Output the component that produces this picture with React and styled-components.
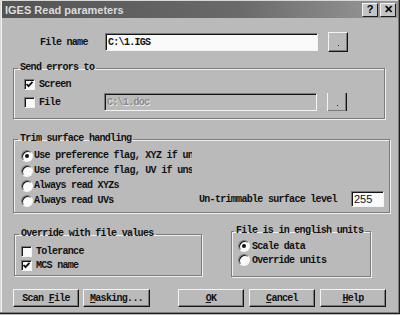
import React from 'react';
import styled, { createGlobalStyle } from 'styled-components';

const Global = createGlobalStyle`
  html, body {
    margin: 0;
    padding: 0;
    background: #bababa;
  }
`;

const mono = `"Liberation Mono", "DejaVu Sans Mono", monospace`;

const Window = styled.div`
  width: 400px;
  height: 314px;
  box-sizing: border-box;
  background: #bababa;
  box-shadow: inset -1px -1px #1e1e1e, inset -2px -2px #7c7c7c, inset 1px 1px #d8d8d8, inset 2px 2px #f2f2f2;
  padding: 1px 2px 0 2px;
  font-family: ${mono};
  font-weight: bold;
  font-size: 10px;
  letter-spacing: -0.7px;
  color: #111;
  overflow: hidden;
`;

const TitleBar = styled.div`
  height: 17px;
  display: flex;
  align-items: center;
  justify-content: space-between;
  padding: 0 2px 0 3px;
  background: linear-gradient(90deg, #545454 0%, #6a6a6a 60%, #9a9a9a 100%);
`;

const Title = styled.span`
  font-family: "Liberation Sans", Arial, sans-serif;
  font-size: 11px;
  font-weight: bold;
  letter-spacing: 0;
  color: #dcdcdc;
`;

const TitleButtons = styled.div`
  display: flex;
  gap: 2px;
`;

const TitleButton = styled.div`
  width: 16px;
  height: 14px;
  box-sizing: border-box;
  background: #c4c4c4;
  border: 1px solid;
  border-color: #f4f4f4 #1a1a1a #1a1a1a #f4f4f4;
  display: flex;
  align-items: center;
  justify-content: center;
  font-family: "Liberation Sans", Arial, sans-serif;
  font-size: 11px;
  font-weight: bold;
  letter-spacing: 0;
  color: #000;
  line-height: 1;
`;

const Content = styled.div`
  display: flex;
  flex-direction: column;
  padding-left: 11px;
`;

const FileRow = styled.div`
  display: flex;
  align-items: center;
  height: 20px;
  margin-top: 14px;
  padding-left: 27px;
`;

const Label = styled.span`
  width: ${p => p.$w || 'auto'};
  flex: none;
  white-space: nowrap;
`;

const TextBox = styled.div`
  width: ${p => p.$w}px;
  height: ${p => p.$h || 18}px;
  box-sizing: border-box;
  flex: none;
  display: flex;
  align-items: center;
  padding-left: 2px;
  border: 1px solid;
  border-color: #7a7a7a #f4f4f4 #f4f4f4 #7a7a7a;
  box-shadow: inset 1px 1px #141414;
  background: ${p => (p.$disabled ? '#bababa' : '#fafafa')};
  color: ${p => (p.$disabled ? '#8a8a8a' : '#111')};
  text-shadow: ${p => (p.$disabled ? '1px 1px #e8e8e8' : 'none')};
  font-family: ${p => (p.$sans ? '"Liberation Sans", Arial, sans-serif' : 'inherit')};
  font-weight: ${p => (p.$sans ? 'normal' : 'bold')};
  letter-spacing: ${p => (p.$sans ? '0' : 'inherit')};
  font-size: ${p => (p.$sans ? '11px' : 'inherit')};
  white-space: nowrap;
`;

const Bevel = styled.div`
  box-sizing: border-box;
  flex: none;
  background: #bababa;
  border: 1px solid;
  border-color: #f4f4f4 #141414 #141414 #f4f4f4;
  box-shadow: inset -1px -1px #7a7a7a;
  display: flex;
  align-items: center;
  justify-content: center;
`;

const DotButton = styled(Bevel)`
  width: 20px;
  height: 20px;
  margin-left: 10px;
  align-items: flex-end;
  padding-bottom: 5px;
  &::after {
    content: '';
    width: 1px;
    height: 1px;
    background: #222;
  }
`;

const Group = styled.fieldset`
  margin: 0;
  margin-top: ${p => p.$top}px;
  margin-left: ${p => p.$left || 0}px;
  padding: 0;
  min-width: 0;
  width: ${p => p.$w}px;
  height: ${p => p.$h}px;
  box-sizing: border-box;
  flex: none;
  border: 1px solid #7c7c7c;
  box-shadow: 1px 1px #f0f0f0, inset 1px 1px #f0f0f0;
`;

const Legend = styled.legend`
  margin-left: ${p => p.$off ?? 4}px;
  padding: 0 2px;
  line-height: 10px;
  white-space: nowrap;
`;

const GroupBody = styled.div`
  display: flex;
  flex-direction: ${p => p.$row ? 'row' : 'column'};
  align-items: ${p => p.$row ? 'flex-end' : 'stretch'};
  gap: ${p => p.$gap || 0}px;
  padding: ${p => p.$pt || 0}px 0 0 ${p => p.$pl || 0}px;
`;

const OptionRow = styled.div`
  display: flex;
  align-items: center;
  height: ${p => p.$h || 14}px;
  white-space: nowrap;
  overflow: hidden;
`;

const Box = styled.span`
  width: 11px;
  height: 11px;
  box-sizing: border-box;
  flex: none;
  margin-right: ${p => p.$gap || 4}px;
  background: #fafafa;
  border: 1px solid;
  border-color: #7a7a7a #f4f4f4 #f4f4f4 #7a7a7a;
  box-shadow: inset 1px 1px #141414;
  display: flex;
  align-items: center;
  justify-content: center;
`;

const Radio = styled.span`
  width: 12px;
  height: 12px;
  box-sizing: border-box;
  flex: none;
  margin-right: ${p => p.$gap || 1}px;
  border-radius: 50%;
  background: #fafafa;
  border: 1px solid;
  border-color: #7a7a7a #f4f4f4 #f4f4f4 #7a7a7a;
  box-shadow: inset 1px 1px #141414;
  display: flex;
  align-items: center;
  justify-content: center;
  &::after {
    content: '';
    display: ${p => (p.$on ? 'block' : 'none')};
    width: 4px;
    height: 4px;
    border-radius: 50%;
    background: #111;
  }
`;

const RadioColumn = styled.div`
  width: 171px;
  flex: none;
  display: flex;
  flex-direction: column;
  overflow: hidden;
`;

const LevelRow = styled.div`
  display: flex;
  align-items: center;
  margin-bottom: 1px;
`;

const BottomRow = styled.div`
  display: flex;
  align-items: flex-start;
  margin-top: 13px;
`;

const ButtonRow = styled.div`
  display: flex;
  margin-top: 12px;
`;

const PushButton = styled(Bevel)`
  width: ${p => p.$w || 66}px;
  height: 18px;
  margin-left: ${p => p.$gap || 0}px;
  white-space: pre;
  u {
    text-decoration: underline;
    text-underline-offset: 1px;
  }
`;

const Check = () => (
  <svg width="9" height="9" viewBox="0 0 9 9">
    <path d="M1.5 4 L3.5 6.2 L7.5 1.8" stroke="#111" strokeWidth="1.8" fill="none" />
  </svg>
);

const CheckItem = ({ on, children, gap }) => (
  <OptionRow>
    <Box $gap={gap}>{on && <Check />}</Box>
    {children}
  </OptionRow>
);

const RadioItem = ({ on, children, h, gap }) => (
  <OptionRow $h={h}>
    <Radio $on={on} $gap={gap} />
    {children}
  </OptionRow>
);

export default function App() {
  return (
    <>
      <Global />
      <Window>
        <TitleBar>
          <Title>IGES Read parameters</Title>
          <TitleButtons>
            <TitleButton>?</TitleButton>
            <TitleButton>✕</TitleButton>
          </TitleButtons>
        </TitleBar>

        <Content>
          <FileRow>
            <Label $w="65px">File name</Label>
            <TextBox $w={213}>C:\1.IGS</TextBox>
            <DotButton />
          </FileRow>

          <Group $top={11} $w={372} $h={56}>
            <Legend>Send errors to</Legend>
            <GroupBody $pt={4} $pl={10} $gap={2}>
              <CheckItem on>Screen</CheckItem>
              <OptionRow $h={18}>
                <Box>{null}</Box>
                <Label $w="65px">File</Label>
                <TextBox $w={213} $disabled>C:\1.doc</TextBox>
                <DotButton />
              </OptionRow>
            </GroupBody>
          </Group>

          <Group $top={15} $w={377} $h={79}>
            <Legend>Trim surface handling</Legend>
            <GroupBody $row $pt={4} $pl={7} $gap={7}>
              <RadioColumn>
                <RadioItem on h={15}>Use preference flag, XYZ if untrimmable</RadioItem>
                <RadioItem h={15}>Use preference flag, UV if unsure</RadioItem>
                <RadioItem h={15}>Always read XYZs</RadioItem>
                <RadioItem h={15}>Always read UVs</RadioItem>
              </RadioColumn>
              <LevelRow>
                <Label $w="152px">Un-trimmable surface level</Label>
                <TextBox $w={33} $h={16} $sans>255</TextBox>
              </LevelRow>
            </GroupBody>
          </Group>

          <BottomRow>
            <Group $top={3} $left={1} $w={188} $h={47}>
              <Legend>Override with file values</Legend>
              <GroupBody $pt={5} $pl={6}>
                <CheckItem>Tolerance</CheckItem>
                <CheckItem on>MCS name</CheckItem>
              </GroupBody>
            </Group>
            <Group $top={0} $left={29} $w={140} $h={51}>
              <Legend $off={2}>File is in english units</Legend>
              <GroupBody $pt={3} $pl={6}>
                <RadioItem on gap={2}>Scale data</RadioItem>
                <RadioItem gap={2}>Override units</RadioItem>
              </GroupBody>
            </Group>
          </BottomRow>

          <ButtonRow>
            <PushButton><span>Scan <u>F</u>ile</span></PushButton>
            <PushButton $w={67} $gap={4}><span><u>M</u>asking...</span></PushButton>
            <PushButton $gap={28}><span><u>O</u>K</span></PushButton>
            <PushButton $gap={5}><span><u>C</u>ancel</span></PushButton>
            <PushButton $gap={5}><span><u>H</u>elp</span></PushButton>
          </ButtonRow>
        </Content>
      </Window>
    </>
  );
}
